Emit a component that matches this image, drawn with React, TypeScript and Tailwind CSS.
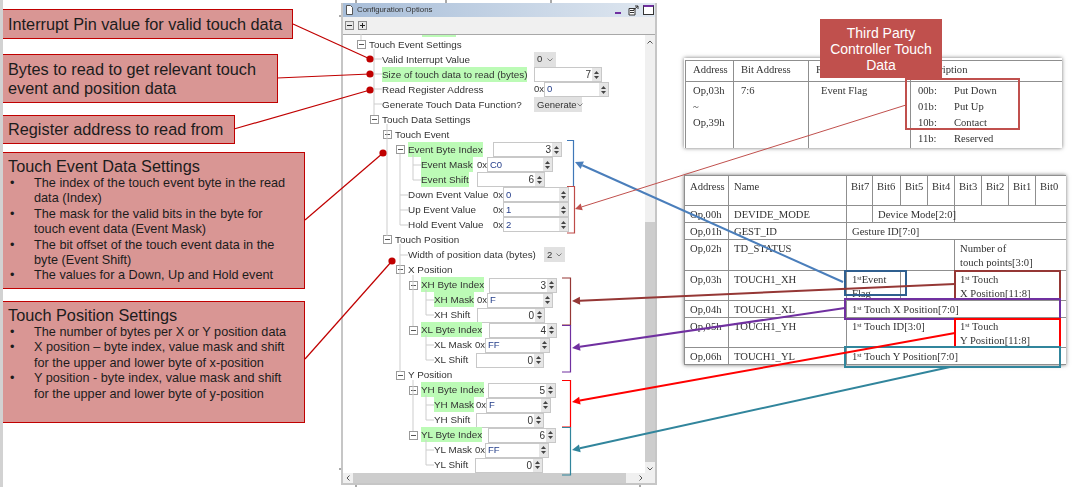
import React from "react";

type Ctrl =
  | { kind: "spin"; value: string; w: string }
  | { kind: "hex"; value: string; w: string }
  | { kind: "select"; value: string; w: string };

type Row = {
  label: string;
  pad: string;
  labelW?: string;
  toggle?: boolean;
  green?: boolean;
  ctrl?: Ctrl;
};

const rows: Row[] = [
  { label: "Touch Event Settings", pad: "pl-[13px]", toggle: true },
  { label: "Valid Interrupt Value", pad: "pl-[26px]", labelW: "w-[152px]", ctrl: { kind: "select", value: "0", w: "w-[22px]" } },
  { label: "Size of touch data to read (bytes)", pad: "pl-[26px]", labelW: "w-[152px]", green: true, ctrl: { kind: "spin", value: "7", w: "w-[68px]" } },
  { label: "Read Register Address", pad: "pl-[26px]", labelW: "w-[152px]", ctrl: { kind: "hex", value: "0", w: "w-[65px]" } },
  { label: "Generate Touch Data Function?", pad: "pl-[26px]", labelW: "w-[152px]", ctrl: { kind: "select", value: "Generate", w: "w-[48px]" } },
  { label: "Touch Data Settings", pad: "pl-[26px]", toggle: true },
  { label: "Touch Event", pad: "pl-[39px]", toggle: true },
  { label: "Event Byte Index", pad: "pl-[52px]", labelW: "w-[85px]", toggle: true, green: true, ctrl: { kind: "spin", value: "3", w: "w-[69px]" } },
  { label: "Event Mask", pad: "pl-[65px]", labelW: "w-[56px]", green: true, ctrl: { kind: "hex", value: "C0", w: "w-[66px]" } },
  { label: "Event Shift", pad: "pl-[65px]", labelW: "w-[56px]", green: true, ctrl: { kind: "spin", value: "6", w: "w-[68px]" } },
  { label: "Down Event Value", pad: "pl-[52px]", labelW: "w-[85px]", ctrl: { kind: "hex", value: "0", w: "w-[66px]" } },
  { label: "Up Event Value", pad: "pl-[52px]", labelW: "w-[85px]", ctrl: { kind: "hex", value: "1", w: "w-[66px]" } },
  { label: "Hold Event Value", pad: "pl-[52px]", labelW: "w-[85px]", ctrl: { kind: "hex", value: "2", w: "w-[66px]" } },
  { label: "Touch Position", pad: "pl-[39px]", toggle: true },
  { label: "Width of position data (bytes)", pad: "pl-[52px]", labelW: "w-[136px]", ctrl: { kind: "select", value: "2", w: "w-[21px]" } },
  { label: "X Position", pad: "pl-[52px]", toggle: true },
  { label: "XH Byte Index", pad: "pl-[65px]", labelW: "w-[68px]", toggle: true, green: true, ctrl: { kind: "spin", value: "3", w: "w-[68px]" } },
  { label: "XH Mask", pad: "pl-[78px]", labelW: "w-[43px]", green: true, ctrl: { kind: "hex", value: "F", w: "w-[66px]" } },
  { label: "XH Shift", pad: "pl-[78px]", labelW: "w-[43px]", ctrl: { kind: "spin", value: "0", w: "w-[68px]" } },
  { label: "XL Byte Index", pad: "pl-[65px]", labelW: "w-[68px]", toggle: true, green: true, ctrl: { kind: "spin", value: "4", w: "w-[68px]" } },
  { label: "XL Mask", pad: "pl-[78px]", labelW: "w-[41px]", ctrl: { kind: "hex", value: "FF", w: "w-[65px]" } },
  { label: "XL Shift", pad: "pl-[78px]", labelW: "w-[42px]", ctrl: { kind: "spin", value: "0", w: "w-[68px]" } },
  { label: "Y Position", pad: "pl-[52px]", toggle: true },
  { label: "YH Byte Index", pad: "pl-[65px]", labelW: "w-[67px]", toggle: true, green: true, ctrl: { kind: "spin", value: "5", w: "w-[68px]" } },
  { label: "YH Mask", pad: "pl-[78px]", labelW: "w-[42px]", green: true, ctrl: { kind: "hex", value: "F", w: "w-[65px]" } },
  { label: "YH Shift", pad: "pl-[78px]", labelW: "w-[42px]", ctrl: { kind: "spin", value: "0", w: "w-[68px]" } },
  { label: "YL Byte Index", pad: "pl-[65px]", labelW: "w-[67px]", toggle: true, green: true, ctrl: { kind: "spin", value: "6", w: "w-[68px]" } },
  { label: "YL Mask", pad: "pl-[78px]", labelW: "w-[41px]", ctrl: { kind: "hex", value: "FF", w: "w-[64px]" } },
  { label: "YL Shift", pad: "pl-[78px]", labelW: "w-[41px]", ctrl: { kind: "spin", value: "0", w: "w-[68px]" } },
];

function Spinner() {
  return (
    <span className="flex h-full w-[9px] shrink-0 flex-col items-center justify-center gap-[2px] bg-[#e6e6e6]">
      <svg width="5" height="3" viewBox="0 0 5 3"><path d="M2.5 0 5 3H0z" fill="#444" /></svg>
      <svg width="5" height="3" viewBox="0 0 5 3"><path d="M0 0h5L2.5 3z" fill="#444" /></svg>
    </span>
  );
}

function Control({ ctrl }: { ctrl: Ctrl }) {
  if (ctrl.kind === "select") {
    return (
      <span className={`${ctrl.w} flex h-[15px] items-center justify-between bg-[#e1e1e1] pl-[3px] pr-[3px] text-[9.5px]`}>
        {ctrl.value}
        <svg width="6" height="4" viewBox="0 0 6 4" className="shrink-0"><path d="M.5.5 3 3 5.5.5" fill="none" stroke="#666" strokeWidth=".8" /></svg>
      </span>
    );
  }
  if (ctrl.kind === "spin") {
    return (
      <span className={`${ctrl.w} flex h-[15px] items-center border border-[#c8c8c8] bg-white`}>
        <span className="flex-1 pr-[1px] text-right text-[10px]">{ctrl.value}</span>
        <Spinner />
      </span>
    );
  }
  return (
    <span className="flex items-center">
      <span className="w-[10px] text-[9.5px]">0x</span>
      <span className={`${ctrl.w} flex h-[15px] items-center border border-[#c8c8c8] bg-white`}>
        <span className="flex-1 pl-[2px] text-[9.5px] text-[#27408b]">{ctrl.value}</span>
        <Spinner />
      </span>
    </span>
  );
}

function TreeRow({ row }: { row: Row }) {
  return (
    <div className={`${row.pad} flex h-[15.04px] items-center whitespace-nowrap`}>
      <span className="flex w-[12px] shrink-0 items-center">
        {row.toggle && (
          <svg width="9" height="9" viewBox="0 0 9 9" className="bg-white">
            <rect x=".5" y=".5" width="8" height="8" fill="none" stroke="#9a9a9a" />
            <path d="M2 4.5h5" stroke="#555" />
          </svg>
        )}
      </span>
      <span className={`${row.labelW ?? ""} shrink-0`}>
        <span className={row.green ? "inline-block h-[15px] bg-[#bcfbb6] leading-[15px]" : "inline-block leading-[15px]"}>{row.label}</span>
      </span>
      {row.ctrl && <Control ctrl={row.ctrl} />}
    </div>
  );
}

function Box({ className, children }: { className: string; children: React.ReactNode }) {
  return <div className={`${className} shrink-0 border border-l-0 border-[#c00000] bg-[#d99694] pl-[5px] text-[#1c1c1c]`}>{children}</div>;
}

function Bullet({ children }: { children: React.ReactNode }) {
  return (
    <li className="flex whitespace-nowrap">
      <span className="w-[26px] shrink-0 pl-[2px]">•</span>
      <span>{children}</span>
    </li>
  );
}

function Arrow({ x1, y1, x2, y2, color, width, head }: { x1: number; y1: number; x2: number; y2: number; color: string; width: number; head: number }) {
  const a = Math.atan2(y2 - y1, x2 - x1);
  const bx = x2 - head * Math.cos(a);
  const by = y2 - head * Math.sin(a);
  const nx = (head / 2) * Math.sin(a);
  const ny = (head / 2) * Math.cos(a);
  return (
    <g>
      <line x1={x1} y1={y1} x2={bx} y2={by} stroke={color} strokeWidth={width} />
      <polygon points={`${x2},${y2} ${bx + nx},${by - ny} ${bx - nx},${by + ny}`} fill={color} />
    </g>
  );
}

const guides = [
  "M361 34V40",
  "M374 49V115M374 59H382M374 74H382M374 89H382M374 104H382",
  "M387 124V236",
  "M400 154V225M400 195H408M400 210H408M400 225H408",
  "M413 154V180M413 165H421M413 180H421",
  "M400 244V372M400 255H408",
  "M413 275V326M426 290V315M426 300H434M426 315H434M426 335V360M426 345H434M426 360H434",
  "M413 380V431M426 395V420M426 405H434M426 420H434M426 440V465M426 450H434M426 465H434",
];

const cell = "border border-[#8f8f8f] px-[7px] pt-[1px] align-top";
const bitCell = "border border-[#8f8f8f] px-[5px] pt-[2px] align-top whitespace-nowrap";
const st = <sup className="text-[6.5px] leading-[0]">st</sup>;

export default function App() {
  return (
    <div className="relative flex h-[487px] w-[1075px] overflow-hidden bg-white font-['Liberation_Sans',Arial,sans-serif]">
      <div className="w-[3px] shrink-0 bg-[#d2d2d2]" />

      {/* Callouts */}
      <div className="flex w-[302px] shrink-0 flex-col items-start pt-[9px]">
        <Box className="flex h-[30px] w-[290px] items-center text-[16.3px]">Interrupt Pin value for valid touch data</Box>
        <Box className="mt-[15px] flex h-[49px] w-[275px] items-center text-[16.3px] leading-[19px]">
          <span>Bytes to read to get relevant touch<br />event and position data</span>
        </Box>
        <Box className="mt-[12px] flex h-[29px] w-[232px] items-center text-[16.3px]">Register address to read from</Box>
        <Box className="mt-[8px] h-[137px] w-[302px] pt-[4px]">
          <div className="text-[16.3px] leading-[19px]">Touch Event Data Settings</div>
          <ul className="text-[12.7px] leading-[15.4px]">
            <Bullet>The index of the touch event byte in the read<br />data (Index)</Bullet>
            <Bullet>The mask for the valid bits in the byte for<br />touch event data (Event Mask)</Bullet>
            <Bullet>The bit offset of the touch event data in the<br />byte (Event Shift)</Bullet>
            <Bullet>The values for a Down, Up and Hold event</Bullet>
          </ul>
        </Box>
        <Box className="mt-[12px] h-[122px] w-[302px] pt-[4px]">
          <div className="text-[16.3px] leading-[19px]">Touch Position Settings</div>
          <ul className="text-[12.7px] leading-[15.4px]">
            <Bullet>The number of bytes per X or Y position data</Bullet>
            <Bullet>X position – byte index, value mask and shift<br />for the upper and lower byte of x-position</Bullet>
            <Bullet>Y position - byte index, value mask and shift<br />for the upper and lower byte of y-position</Bullet>
          </ul>
        </Box>
      </div>

      {/* Configuration panel */}
      <div className="ml-[36px] mt-[3px] flex h-[482px] w-[316px] shrink-0 flex-col border-x-2 border-b-2 border-[#c6c6c6] bg-[#f0f0f0] text-[#333] blur-[0.3px]">
        <div className="flex h-[14px] shrink-0 items-center bg-gradient-to-r from-[#a7bdd8] to-[#dfe7f0] pl-[3px]">
          <svg width="7" height="10" viewBox="0 0 7 10" className="mr-[4px] shrink-0">
            <path d="M.5.5h4l2 2v7h-6z" fill="#fff" stroke="#555" />
          </svg>
          <span className="flex-1 text-[7.8px]">Configuration Options</span>
          <span className="mr-[7px] h-[2px] w-[6px] translate-y-[3px] bg-[#7030a0]" />
          <svg width="11" height="11" viewBox="0 0 11 11" className="mr-[4px] shrink-0">
            <path d="M1 3.5h6v6.5H1zM2 5.5h4M2 7.5h4" fill="#fff" stroke="#333" />
            <path d="M5 5.5 10 1M7 1h3v3" fill="none" stroke="#333" />
          </svg>
          <span className="mr-[1px] h-[10px] w-[11px] border border-[#333] border-t-[2px] border-t-[#7030a0] bg-white" />
        </div>
        <div className="flex h-[17px] shrink-0 items-center gap-[4px] pl-[2px]">
          <svg width="9" height="9" viewBox="0 0 9 9" className="bg-[#e8e8e8]">
            <rect x=".5" y=".5" width="8" height="8" fill="none" stroke="#8a8a8a" />
            <path d="M2 4.5h5" stroke="#222" />
          </svg>
          <svg width="9" height="9" viewBox="0 0 9 9" className="bg-[#e8e8e8]">
            <rect x=".5" y=".5" width="8" height="8" fill="none" stroke="#8a8a8a" />
            <path d="M2 4.5h5M4.5 2v5" stroke="#222" />
          </svg>
        </div>
        <div className="flex min-h-0 flex-1 border-t border-[#a8a8a8] bg-white">
          <div className="min-w-0 flex-1 overflow-hidden pl-[1px] text-[9.9px]">
            <div className="ml-[78px] h-[2px] w-[34px] bg-[#bcfbb6]" />
            {rows.map((row) => (
              <TreeRow key={row.label} row={row} />
            ))}
          </div>
          <div className="flex w-[10px] shrink-0 flex-col bg-[#f0f0f0]">
            <div className="mt-[2px] flex h-[10px] shrink-0 items-center justify-center">
              <svg width="6" height="4" viewBox="0 0 6 4"><path d="M.5 3.5 3 1l2.5 2.5" fill="none" stroke="#555" /></svg>
            </div>
            <div className="mt-[175px] h-[240px] shrink-0 bg-[#cdcdcd]" />
            <div className="mt-[2px] flex h-[10px] shrink-0 items-center justify-center">
              <svg width="6" height="4" viewBox="0 0 6 4"><path d="M.5.5 3 3 5.5.5" fill="none" stroke="#555" /></svg>
            </div>
          </div>
        </div>
        <div className="flex h-[10px] shrink-0 items-center bg-[#f0f0f0]">
          <div className="flex w-[10px] justify-center">
            <svg width="4" height="6" viewBox="0 0 4 6"><path d="M3.5.5 1 3l2.5 2.5" fill="none" stroke="#555" /></svg>
          </div>
          <div className="h-full w-[273px] bg-[#cdcdcd]" />
          <div className="flex flex-1 justify-center">
            <svg width="4" height="6" viewBox="0 0 4 6"><path d="M.5.5 3 3 .5 5.5" fill="none" stroke="#555" /></svg>
          </div>
        </div>
      </div>

      {/* Datasheet excerpts */}
      <div className="ml-[27px] flex w-[382px] shrink-0 flex-col pt-[58px] font-['Liberation_Serif',serif] text-[10.6px] leading-[16px] text-[#333] blur-[0.3px]">
        <div className="relative h-[90px] w-[378px] overflow-hidden bg-white pl-[1px] pt-[2px] shadow-[0_0_4px_rgba(0,0,0,0.55)]">
          <table className="w-[390px] table-fixed border-collapse">
            <colgroup>
              <col className="w-[48px]" />
              <col className="w-[75px]" />
              <col className="w-[102px]" />
              <col />
            </colgroup>
            <tbody>
              <tr className="h-[21px]">
                <td className={cell}>Address</td>
                <td className={cell}>Bit Address</td>
                <td className={cell}>Register Name</td>
                <td className={cell}>Description</td>
              </tr>
              <tr className="h-[68px]">
                <td className={cell}>Op,03h<br />~<br />Op,39h</td>
                <td className={cell}>7:6</td>
                <td className={`${cell} pl-[12px]`}>Event Flag</td>
                <td className={cell}>
                  <div className="grid grid-cols-[36px_1fr]">
                    <span>00b:</span><span>Put Down</span>
                    <span>01b:</span><span>Put Up</span>
                    <span>10b:</span><span>Contact</span>
                    <span>11b:</span><span>Reserved</span>
                  </div>
                </td>
              </tr>
            </tbody>
          </table>
        </div>

        <div className="mt-[27px] h-[190px] w-[382px] overflow-hidden bg-white leading-[13.5px] shadow-[0_0_4px_rgba(0,0,0,0.55)]">
          <table className="w-[382px] table-fixed border-collapse">
            <colgroup>
              <col className="w-[44px]" />
              <col className="w-[118px]" />
              <col className="w-[26px]" />
              <col className="w-[28px]" />
              <col className="w-[27px]" />
              <col className="w-[27px]" />
              <col className="w-[27px]" />
              <col className="w-[27px]" />
              <col className="w-[27px]" />
              <col className="w-[31px]" />
            </colgroup>
            <tbody>
              <tr className="h-[30px]">
                <td className={`${bitCell} !pt-[4px]`}>Address</td>
                <td className={`${bitCell} !pt-[4px]`}>Name</td>
                {["Bit7", "Bit6", "Bit5", "Bit4", "Bit3", "Bit2", "Bit1", "Bit0"].map((b) => (
                  <td key={b} className={`${bitCell} !px-[4px] !pt-[4px]`}>{b}</td>
                ))}
              </tr>
              <tr className="h-[17px]">
                <td className={bitCell}>Op,00h</td>
                <td className={bitCell}>DEVIDE_MODE</td>
                <td className={bitCell} />
                <td className={bitCell} colSpan={3}>Device Mode[2:0]</td>
                <td className={bitCell} colSpan={4} />
              </tr>
              <tr className="h-[17px]">
                <td className={bitCell}>Op,01h</td>
                <td className={bitCell}>GEST_ID</td>
                <td className={bitCell} colSpan={8}>Gesture ID[7:0]</td>
              </tr>
              <tr className="h-[31px]">
                <td className={bitCell}>Op,02h</td>
                <td className={bitCell}>TD_STATUS</td>
                <td className={bitCell} colSpan={4} />
                <td className={bitCell} colSpan={4}>Number of<br />touch points[3:0]</td>
              </tr>
              <tr className="h-[30px]">
                <td className={bitCell}>Op,03h</td>
                <td className={bitCell}>TOUCH1_XH</td>
                <td className={bitCell} colSpan={2}>1{st}Event<br />Flag</td>
                <td className={bitCell} colSpan={2} />
                <td className={bitCell} colSpan={4}>1{st} Touch<br />X Position[11:8]</td>
              </tr>
              <tr className="h-[17px]">
                <td className={bitCell}>Op,04h</td>
                <td className={bitCell}>TOUCH1_XL</td>
                <td className={bitCell} colSpan={8}>1{st} Touch X Position[7:0]</td>
              </tr>
              <tr className="h-[30px]">
                <td className={bitCell}>Op,05h</td>
                <td className={bitCell}>TOUCH1_YH</td>
                <td className={bitCell} colSpan={4}>1{st} Touch ID[3:0]</td>
                <td className={bitCell} colSpan={4}>1{st} Touch<br />Y Position[11:8]</td>
              </tr>
              <tr className="h-[17px]">
                <td className={bitCell}>Op,06h</td>
                <td className={bitCell}>TOUCH1_YL</td>
                <td className={bitCell} colSpan={8}>1{st} Touch Y Position[7:0]</td>
              </tr>
            </tbody>
          </table>
        </div>
      </div>

      {/* Title tag over the upper table */}
      <div className="absolute left-[820px] top-[19px] flex h-[59px] w-[122px] flex-col items-center justify-center bg-[#c0504d] text-center text-[14px] leading-[16px] text-white">
        <span>Third Party</span>
        <span>Controller Touch</span>
        <span>Data</span>
      </div>

      {/* Annotation lines, brackets and markers */}
      <svg className="pointer-events-none absolute inset-0" width="1075" height="487" viewBox="0 0 1075 487">
        <path d={guides.join("")} fill="none" stroke="#cdcdcd" />

        <g stroke="#c00000" strokeWidth="1.2" fill="none">
          <path d="M293 24 370 59" />
          <path d="M277 78 370 74" />
          <path d="M234 129 370 90" />
          <path d="M305 220 383 153" />
          <path d="M305 359 392 261" />
        </g>
        <g fill="#c00000">
          <circle cx="370" cy="59" r="3.6" />
          <circle cx="370" cy="74" r="3.6" />
          <circle cx="370" cy="90" r="3.6" />
          <circle cx="383" cy="153" r="3.6" />
          <circle cx="392" cy="261" r="3.6" />
        </g>

        <g fill="none" strokeWidth="1.2">
          <path d="M567 140.5H573.5V186" stroke="#3f78b8" />
          <path d="M567 186.5H574.5V233H567" stroke="#be4b48" />
          <path d="M562 278H570.5V325H562" stroke="#953735" />
          <path d="M562 325.5H570.5V372H562" stroke="#7030a0" />
          <path d="M562 380.5H570.5V427H562" stroke="#ff0000" />
          <path d="M562 427.5H570.5V475H562" stroke="#31859c" />
        </g>

        <g fill="none" strokeWidth="2">
          <rect x="906" y="79" width="113" height="50" stroke="#c0504d" />
          <rect x="845" y="271" width="61" height="24" stroke="#2f5f8f" />
          <rect x="955" y="271" width="105" height="28" stroke="#953735" />
          <rect x="845" y="299" width="215" height="20" stroke="#7030a0" />
          <rect x="955" y="319" width="105" height="28" stroke="#ff0000" />
          <rect x="845" y="347" width="215" height="20" stroke="#31859c" />
        </g>

        <Arrow x1={843} y1={282} x2={575} y2={162} color="#4a7ebb" width={2} head={8} />
        <Arrow x1={906} y1={105} x2={575} y2={209} color="#c0504d" width={1} head={7} />
        <Arrow x1={955} y1={284} x2={572} y2={301} color="#953735" width={2} head={8} />
        <Arrow x1={845} y1={308} x2={572} y2={348} color="#7030a0" width={2} head={8} />
        <Arrow x1={955} y1={333} x2={572} y2={402} color="#ff0000" width={2} head={8} />
        <Arrow x1={950} y1={367} x2={572} y2={450} color="#31859c" width={2} head={8} />

        <path d="M356 0V3M446 0V3M551 0V3M356 485V487M640 485V487M339 16H341M339 469H341" stroke="#555" />
      </svg>
    </div>
  );
}
